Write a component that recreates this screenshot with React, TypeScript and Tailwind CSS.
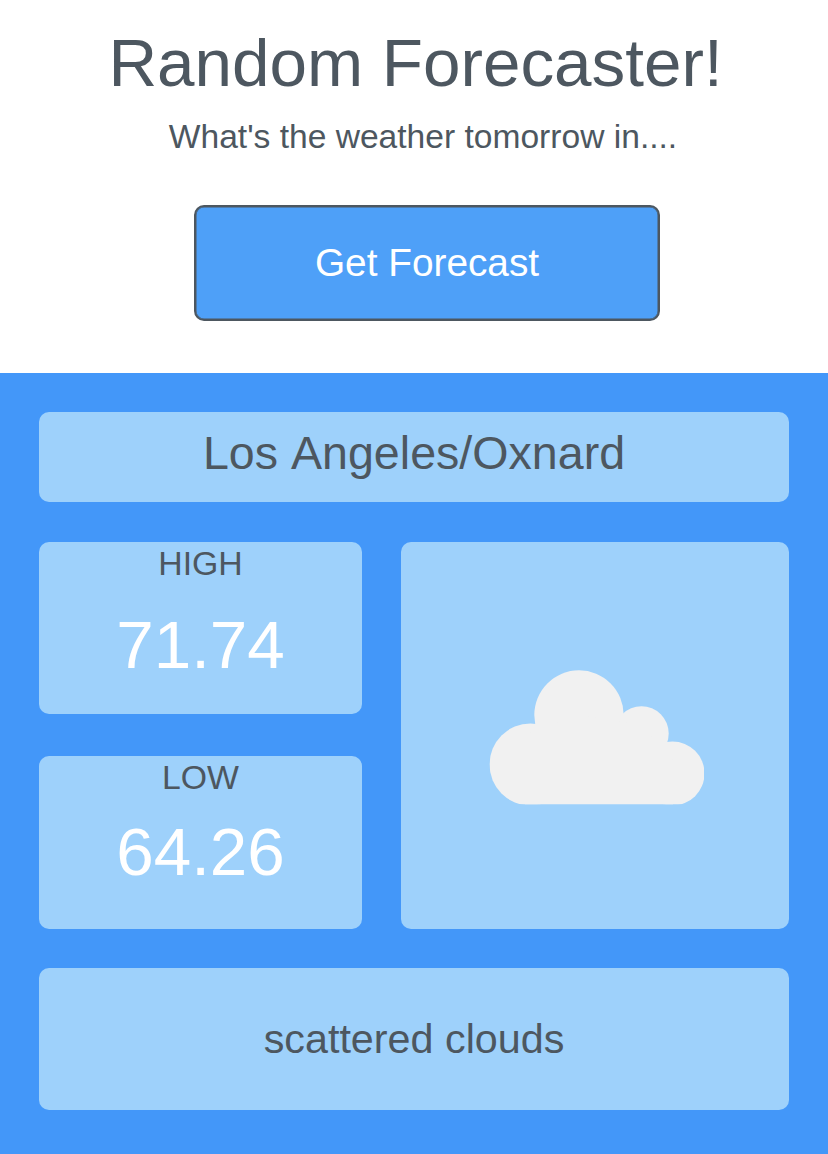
import type { ReactNode } from "react";

function Panel({ className, children }: { className: string; children: ReactNode }) {
  return <div className={"rounded-[10px] bg-[#9ed1fb] " + className}>{children}</div>;
}

function Cloud() {
  return (
    <svg className="blur-[0.6px]" width="216" height="136" viewBox="489 669 216 136" fill="#f1f1f1" aria-hidden="true">
      <clipPath id="cloud-base">
        <rect x="489.5" y="669" width="214.5" height="135.2" />
      </clipPath>
      <g clipPath="url(#cloud-base)">
        <circle cx="530.5" cy="764.5" r="41" />
        <circle cx="579" cy="715" r="44.7" />
        <circle cx="641.5" cy="733.5" r="27.2" />
        <circle cx="672.5" cy="773.5" r="32" />
        <path d="M525 805V735L579 715L641 725L673 760V805Z" />
      </g>
    </svg>
  );
}

export default function App() {
  return (
    <main className="flex h-[1154px] w-[828px] flex-col overflow-hidden bg-white font-['Liberation_Sans',Arial,sans-serif] text-[#4d5760] [font-kerning:none]">
      <header className="flex h-[373px] shrink-0 flex-col items-center">
        <h1 className="mt-[24px] ml-[3px] text-[67.4px] leading-[78px] whitespace-nowrap">Random Forecaster!</h1>
        <p className="mt-[15px] ml-[18px] text-[33.6px] leading-[40px] whitespace-nowrap">What's the weather tomorrow in....</p>
        <button className="mt-[48px] ml-[26px] h-[116px] w-[466px] rounded-[10px] border-2 border-[#4d5760] bg-[#4ea0f8] text-[38.8px] text-white shadow-[inset_0_0_0_0.5px_#4d5760]">
          Get Forecast
        </button>
      </header>
      <section className="flex grow flex-col bg-[#4397f9] px-[39px] pt-[39px]">
        <Panel className="flex h-[90px] items-center justify-center pb-[6px] text-[46.6px]">Los Angeles/Oxnard</Panel>
        <div className="mt-[40px] flex h-[387px] gap-[39px]">
          <div className="flex w-[323px] flex-col justify-between">
            <Panel className="h-[172px] text-center">
              <h2 className="pt-px text-[33.8px] leading-[40px]">HIGH</h2>
              <p className="mt-[23px] text-[67.4px] leading-[78px] text-white">71.74</p>
            </Panel>
            <Panel className="h-[173px] text-center">
              <h2 className="pt-px text-[33.8px] leading-[40px]">LOW</h2>
              <p className="mt-[16px] text-[67.4px] leading-[78px] text-white">64.26</p>
            </Panel>
          </div>
          <Panel className="flex w-[388px] items-center justify-center pt-[3px] pl-[4px]"><Cloud /></Panel>
        </div>
        <Panel className="mt-[39px] flex h-[142px] items-center justify-center pt-[2px] text-[41.3px]">scattered clouds</Panel>
      </section>
    </main>
  );
}
